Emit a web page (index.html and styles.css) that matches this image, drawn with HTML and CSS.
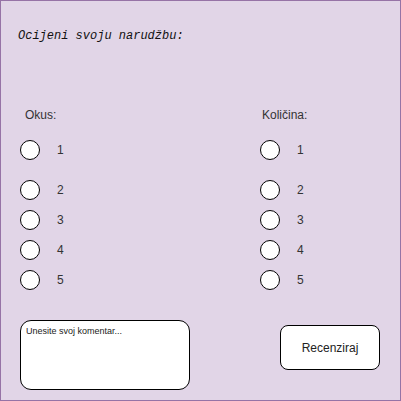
FILE: index.html
```html
<!DOCTYPE html>
<html>
<head>
<meta charset="utf-8">
<link rel="stylesheet" href="styles.css">
</head>
<body>
<div class="frame">
  <div class="title">Ocijeni svoju narudžbu:</div>
  <div class="columns">
    <div class="col">
      <div class="label label-left">Okus:</div>
      <div class="opt first"><span class="radio"></span><span class="num">1</span></div>
      <div class="opt second"><span class="radio"></span><span class="num">2</span></div>
      <div class="opt"><span class="radio"></span><span class="num">3</span></div>
      <div class="opt"><span class="radio"></span><span class="num">4</span></div>
      <div class="opt"><span class="radio"></span><span class="num">5</span></div>
    </div>
    <div class="col">
      <div class="label label-right">Količina:</div>
      <div class="opt first"><span class="radio"></span><span class="num">1</span></div>
      <div class="opt second"><span class="radio"></span><span class="num">2</span></div>
      <div class="opt"><span class="radio"></span><span class="num">3</span></div>
      <div class="opt"><span class="radio"></span><span class="num">4</span></div>
      <div class="opt"><span class="radio"></span><span class="num">5</span></div>
    </div>
  </div>
  <div class="bottom">
    <div class="comment">Unesite svoj komentar...</div>
    <div class="button">Recenziraj</div>
  </div>
</div>
</body>
</html>
```

FILE: styles.css
```css
html, body {
  margin: 0;
  padding: 0;
  background: #ffffff;
}

.frame {
  width: 401px;
  height: 401px;
  box-sizing: border-box;
  border: 1px solid #9673a6;
  background: #e1d5e7;
  font-family: "Liberation Sans", Arial, sans-serif;
  color: #333333;
  display: flex;
  flex-direction: column;
}

.title {
  margin-top: 28px;
  margin-left: 17px;
  font-family: "Liberation Mono", "Courier New", monospace;
  font-style: italic;
  font-size: 12px;
  line-height: 14px;
  color: #111111;
}

.columns {
  display: grid;
  grid-template-columns: 240px 1fr;
  padding-left: 19px;
  margin-top: 65px;
}

.col {
  display: flex;
  flex-direction: column;
}

.label {
  font-size: 12px;
  line-height: 14px;
  height: 14px;
}

.label-left {
  margin-left: 5px;
}

.label-right {
  margin-left: 2px;
}

.opt {
  display: flex;
  align-items: center;
  height: 20px;
  margin-top: 10px;
}

.opt.first {
  margin-top: 18px;
}

.opt.second {
  margin-top: 20px;
}

.radio {
  width: 20px;
  height: 20px;
  box-sizing: border-box;
  border: 1.5px solid #000000;
  border-radius: 50%;
  background: #ffffff;
  flex: none;
}

.num {
  margin-left: 17px;
  font-size: 12px;
  line-height: 14px;
}

.bottom {
  display: flex;
  align-items: flex-start;
  padding-left: 19px;
  margin-top: 30px;
}

.comment {
  width: 170px;
  height: 70px;
  box-sizing: border-box;
  border: 1.5px solid #000000;
  border-radius: 11px;
  background: #ffffff;
  font-size: 9px;
  line-height: 11px;
  padding: 5px 0 0 5px;
  color: #222222;
}

.button {
  margin-left: 90px;
  margin-top: 5px;
  width: 100px;
  height: 45px;
  box-sizing: border-box;
  border: 1.5px solid #000000;
  border-radius: 8px;
  background: #ffffff;
  font-size: 12px;
  display: flex;
  align-items: center;
  justify-content: center;
  color: #222222;
}
```
